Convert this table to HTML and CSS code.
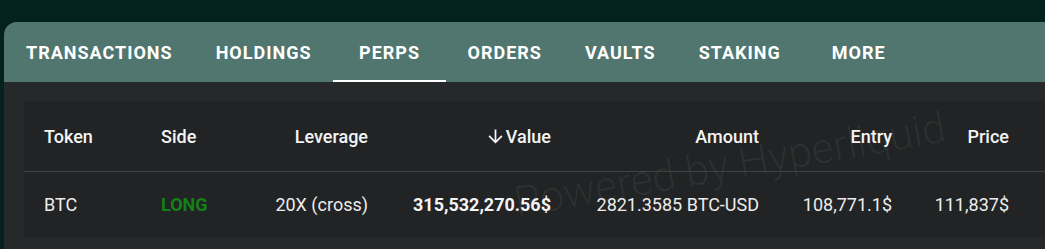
FILE: index.html
```html
<!DOCTYPE html>
<html>
<head>
<meta charset="utf-8">
<link rel="stylesheet" href="styles.css">
</head>
<body>
<div class="card">
  <nav class="tabs">
    <div class="tab">TRANSACTIONS</div>
    <div class="tab">HOLDINGS</div>
    <div class="tab active">PERPS</div>
    <div class="tab">ORDERS</div>
    <div class="tab">VAULTS</div>
    <div class="tab">STAKING</div>
    <div class="tab">MORE</div>
  </nav>
  <div class="content">
    <div class="panel">
      <div class="watermark">Powered by Hyperliquid</div>
      <div class="row head">
        <div class="c token">Token</div>
        <div class="c side">Side</div>
        <div class="c lev r">Leverage</div>
        <div class="c val r"><svg class="arrow" viewBox="0 0 24 24" width="21" height="21"><path fill="currentColor" d="M20 12l-1.41-1.41L13 16.17V4h-2v12.17l-5.58-5.59L4 12l8 8 8-8z"/></svg>Value</div>
        <div class="c amt r">Amount</div>
        <div class="c ent r">Entry</div>
        <div class="c pri r">Price</div>
      </div>
      <div class="row body">
        <div class="c token">BTC</div>
        <div class="c side long">LONG</div>
        <div class="c lev r">20X (cross)</div>
        <div class="c val r bold">315,532,270.56$</div>
        <div class="c amt r">2821.3585 BTC-USD</div>
        <div class="c ent r">108,771.1$</div>
        <div class="c pri r">111,837$</div>
      </div>
    </div>
  </div>
</div>
</body>
</html>
```

FILE: styles.css
```css
html, body {
  margin: 0;
  padding: 0;
}
body {
  background: #03221f;
  width: 1045px;
  height: 249px;
  overflow: hidden;
  font-family: Roboto, "Liberation Sans", sans-serif;
  padding-top: 22px;
  padding-left: 4px;
  box-sizing: border-box;
}
.card {
  width: 1080px;
  border-radius: 13px 13px 0 0;
  overflow: hidden;
  background: #25292a;
  height: 227px;
}
.tabs {
  display: flex;
  height: 60px;
  background: #50766f;
}
.tab {
  box-sizing: border-box;
  min-width: 113px;
  padding: 0 21px 0 22px;
  display: flex;
  align-items: center;
  justify-content: center;
  color: #ffffff;
  font-size: 18px;
  font-weight: 700;
  letter-spacing: 1px;
  position: relative;
}
.tab.active::after {
  content: "";
  position: absolute;
  left: 0;
  right: 0;
  bottom: 0;
  height: 2px;
  background: #ffffff;
}
.content {
  padding: 19px 0 0 20px;
}
.panel {
  position: relative;
  background: #212324;
  width: 1040px;
  height: 136px;
  overflow: hidden;
}
.row {
  display: grid;
  grid-template-columns: 117px 107px 140px 183px 208px 133px 117px;
  align-items: center;
  position: relative;
}
.row.head {
  height: 70px;
  border-bottom: 1px solid #3f4343;
}
.row.body {
  height: 65px;
}
.c {
  padding: 0 20px;
  font-size: 18px;
  color: #ececec;
  white-space: nowrap;
}
.head .c {
  font-weight: 500;
  color: #f4f4f4;
}
.r {
  text-align: right;
}
.val {
  display: flex;
  justify-content: flex-end;
  align-items: center;
}
.arrow {
  margin-right: 0;
  color: #f4f4f4;
}
.bold {
  font-weight: 700;
  color: #f4f4f4;
}
.long {
  color: #158015;
  font-weight: 700;
}
.watermark {
  position: absolute;
  left: 493px;
  top: 81px;
  line-height: 1;
  font-family: Roboto, "Liberation Sans", sans-serif;
  font-weight: 300;
  font-size: 42.5px;
  color: rgba(255, 255, 255, 0.06);
  transform: rotate(-10deg);
  transform-origin: 0 35px;
  white-space: nowrap;
  pointer-events: none;
}
```
